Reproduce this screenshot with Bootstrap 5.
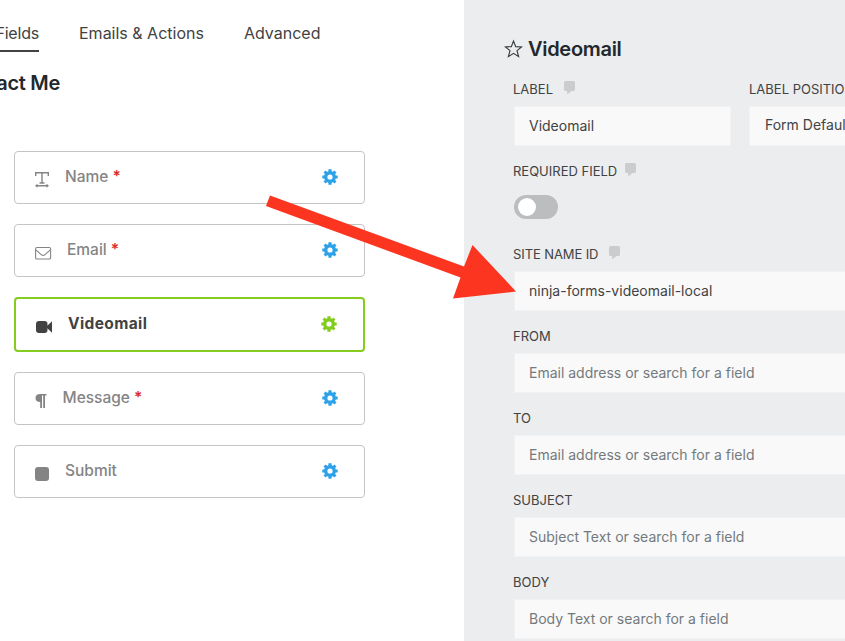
<!DOCTYPE html>
<html lang="en">
<head>
<meta charset="utf-8">
<meta name="viewport" content="width=device-width, initial-scale=1">
<title>Contact Me - Form Fields</title>
<link href="https://cdn.jsdelivr.net/npm/bootstrap@5.3.0/dist/css/bootstrap.min.css" rel="stylesheet">
<style>
  body { font-family: Inter, "Liberation Sans", sans-serif; font-size: 16px; line-height: 20px; color: #424242; }
  .builder { height: 641px; }
  .fields-pane { width: 464px; }
  .settings-pane { width: 381px; background: #ebedee; padding: 36px 0 0 50px; }
  .tabs { height: 52px; gap: 40px; font-size: 16px; }
  .tabs a { color: #424242; padding: 0 0 9px; white-space: nowrap; }
  .tabs .tab-current { width: 39px; height: 29px; border-bottom: 2px solid #424242; letter-spacing: -.2px; }
  .form-title { width: 60px; height: 24px; margin: 19px 0 56px; font-size: 20px; line-height: 24px; font-weight: 600; letter-spacing: -.3px; color: #23282d; white-space: nowrap; }
  .field-list { gap: 20px; width: 365px; padding-left: 14px; }
  .field-item { height: 53px; border: 1px solid #c4c4c4; border-radius: 4px; padding: 0 26.500px 0 20px; color: #848484; font-size: 15.5px; font-weight: 500; background: #fff; }
  .field-item .field-icon { width: 18px; height: 18px; margin-top: 4px; }
  .field-item .field-name { line-height: 20px; margin-bottom: 1px; }
  .field-item .gear { width: 16px; height: 16px; color: #2ea2e8; margin-bottom: 2px; }
  .field-current { height: 55px; border: 2px solid #84cc1e; color: #424242; font-weight: 700; }
  .field-current .field-name { letter-spacing: .38px; }
  .field-current .gear { color: #84cc1e; }
  .req { color: #dd2c2c; font-weight: 600; }
  .gap-name { margin-left: 12px; } .gap-email { margin-left: 14px; } .gap-video { margin-left: 14px; } .gap-message { margin-left: 9.500px; }
  .pane-title { height: 25px; margin: 0 0 18px -10px; gap: 5px; font-size: 20px; font-weight: 600; line-height: 24px; letter-spacing: -.3px; color: #23282d; }
  .setting { height: 82px; width: 400px; }
  .setting-tall { height: 83px; }
  .setting-label { height: 20px; margin: 0 0 7px -1px; font-size: 13px; white-space: nowrap; }
  .setting-label svg { width: 11px; height: 13px; margin-bottom: 3px; }
  .setting .setting-input { height: 40px; border: 1px solid #f1f2f3; border-radius: 0; background: #f9f9f9; color: #424242; font-size: 14px; padding: 0 14px 2px; }
  .setting .setting-input::placeholder { color: #74797d; opacity: 1; }
  .setting .select-like { padding: 0 15px 3px; }
  .label-col { width: 217px; }
  .gap-comment { margin-left: 11px; }
  .label-gap { margin-right: 18px; }
  .site-label { letter-spacing: -.1px; }
  .toggle { width: 44px; height: 24px; border-radius: 12px; background: #bcbdbf; padding: 3px 4px; margin-top: 14px; }
  .toggle span { width: 18px; height: 18px; border-radius: 50%; background: #fff; }
  .arrow { left: 0; top: 0; pointer-events: none; }
</style>
<script src="https://cdn.jsdelivr.net/npm/bootstrap@5.3.0/dist/js/bootstrap.bundle.min.js"></script>
</head>
<body class="overflow-hidden bg-white">
<svg class="d-none" xmlns="http://www.w3.org/2000/svg">
  <symbol id="gear" viewBox="0 0 16 16"><g fill="currentColor"><path fill-rule="evenodd" d="M8 2a6 6 0 1 0 0 12A6 6 0 0 0 8 2zM8 5.400a2.600 2.600 0 1 1 0 5.200 2.600 2.600 0 0 1 0-5.200z"/><path d="M6.400 .3h3.200V4H6.400zM6.400 12h3.200v3.700H6.400zM.3 6.400H4v3.200H.3zM12 6.400h3.700v3.200H12z"/><path d="M3.600 1.500L5.700 3.600 3.600 5.700 1.500 3.600zM12.400 1.500l2.100 2.100-2.100 2.100-2.100-2.100zM3.600 14.500l-2.100-2.100 2.100-2.100 2.100 2.100zM12.400 14.500l-2.100-2.100 2.100-2.100 2.100 2.100z"/></g></symbol>
  <symbol id="comment" viewBox="0 0 11 13"><path fill="#cbcccd" d="M1.500 0h8A1.500 1.500 0 0 1 11 1.500v7a1.500 1.500 0 0 1-1.500 1.500H7.500L3.200 13.500V10H1.500A1.500 1.500 0 0 1 0 8.500V1.500A1.500 1.500 0 0 1 1.500 0z"/></symbol>
</svg>
<div class="builder d-flex position-relative overflow-hidden">
  <main class="fields-pane flex-shrink-0">
    <nav class="tabs d-flex align-items-end">
      <a href="#" class="tab-current d-flex justify-content-end text-decoration-none">Fields</a>
      <a href="#" class="text-decoration-none">Emails &amp; Actions</a>
      <a href="#" class="text-decoration-none">Advanced</a>
    </nav>
    <h1 class="form-title d-flex justify-content-end">Contact Me</h1>
    <div class="field-list d-flex flex-column">
      <div class="field-item d-flex align-items-center">
        <svg class="field-icon" viewBox="0 0 18 18" fill="none" stroke="#848484"><path d="M.7 5V1.700h12.600V5M7 2v9.800M4.500 12h5M1 14.800h12" stroke-width="1.400"/><path d="M2.500 12.800L0 14.800l2.500 2zM11.500 12.800l2.500 2-2.500 2z" fill="#848484" stroke="none"/></svg>
        <span class="field-name gap-name">Name <span class="req">*</span></span>
        <svg class="gear ms-auto"><use href="#gear"/></svg>
      </div>
      <div class="field-item d-flex align-items-center">
        <svg class="field-icon" viewBox="0 0 18 18" fill="none" stroke="#848484" stroke-width="1.100"><rect x=".6" y="3.500" width="15" height="11.500" rx="1.300"/><path d="M.8 5.800l5.700 5q1.600 1.300 3.200 0l5.700-5"/></svg>
        <span class="field-name gap-email">Email <span class="req">*</span></span>
        <svg class="gear ms-auto"><use href="#gear"/></svg>
      </div>
      <div class="field-item field-current d-flex align-items-center">
        <svg class="field-icon" viewBox="0 0 18 18" fill="#424242"><rect x="0" y="3" width="11.500" height="12" rx="3"/><path d="M11 8l5-4.700v11.400L11 10z"/></svg>
        <span class="field-name gap-video">Videomail</span>
        <svg class="gear ms-auto"><use href="#gear"/></svg>
      </div>
      <div class="field-item d-flex align-items-center">
        <svg class="field-icon" viewBox="0 0 18 18" fill="#848484"><path d="M5.200 2h6.300v1.400H10V16H8.200V3.400H7V16H5.200v-6Q.5 10 .5 6t4.700-4z"/></svg>
        <span class="field-name gap-message">Message <span class="req">*</span></span>
        <svg class="gear ms-auto"><use href="#gear"/></svg>
      </div>
      <div class="field-item d-flex align-items-center">
        <svg class="field-icon" viewBox="0 0 18 18" fill="#848484"><rect x="0" y="2" width="14" height="14" rx="3"/></svg>
        <span class="field-name gap-name">Submit</span>
        <svg class="gear ms-auto"><use href="#gear"/></svg>
      </div>
    </div>
  </main>
  <aside class="settings-pane flex-shrink-0">
    <h2 class="pane-title d-flex align-items-center">
      <svg width="19" height="19" viewBox="0 0 19 19" fill="none" stroke="#34393d" stroke-width="1.100"><path d="M9.500 2l2.200 5.600 5.900.3-4.600 3.800 1.600 5.900-5.100-3.300-5.100 3.300L6 11.700 1.400 7.900l5.900-.3z"/></svg>
      <span>Videomail</span>
    </h2>
    <div class="setting d-flex">
      <div class="label-col flex-shrink-0 label-gap">
        <label class="setting-label d-flex align-items-center" for="s-label">LABEL<svg class="gap-comment"><use href="#comment"/></svg></label>
        <input id="s-label" class="form-control setting-input" value="Videomail">
      </div>
      <div class="label-col flex-shrink-0">
        <label class="setting-label d-flex align-items-center ms-0" for="s-pos">LABEL POSITION</label>
        <input id="s-pos" class="form-control setting-input select-like" value="Form Default">
      </div>
    </div>
    <div class="setting setting-tall">
      <div class="setting-label d-flex align-items-center">REQUIRED FIELD<svg class="ms-2"><use href="#comment"/></svg></div>
      <div class="toggle"><span class="d-block"></span></div>
    </div>
    <div class="setting">
      <label class="setting-label d-flex align-items-center site-label" for="s-site">SITE NAME ID<svg class="gap-comment"><use href="#comment"/></svg></label>
      <input id="s-site" class="form-control setting-input" value="ninja-forms-videomail-local">
    </div>
    <div class="setting">
      <label class="setting-label d-flex align-items-center" for="s-from">FROM</label>
      <input id="s-from" class="form-control setting-input" placeholder="Email address or search for a field">
    </div>
    <div class="setting">
      <label class="setting-label d-flex align-items-center" for="s-to">TO</label>
      <input id="s-to" class="form-control setting-input" placeholder="Email address or search for a field">
    </div>
    <div class="setting">
      <label class="setting-label d-flex align-items-center" for="s-subject">SUBJECT</label>
      <input id="s-subject" class="form-control setting-input" placeholder="Subject Text or search for a field">
    </div>
    <div class="setting">
      <label class="setting-label d-flex align-items-center" for="s-body">BODY</label>
      <input id="s-body" class="form-control setting-input" placeholder="Body Text or search for a field">
    </div>
  </aside>
  <svg class="arrow position-absolute" width="845" height="641" viewBox="0 0 845 641"><path fill="#fc3521" d="M270 195.500L464 266.500 472.500 245 516 291.500 453 298.500 460.500 277.500 266 206z"/></svg>
</div>
</body>
</html>
